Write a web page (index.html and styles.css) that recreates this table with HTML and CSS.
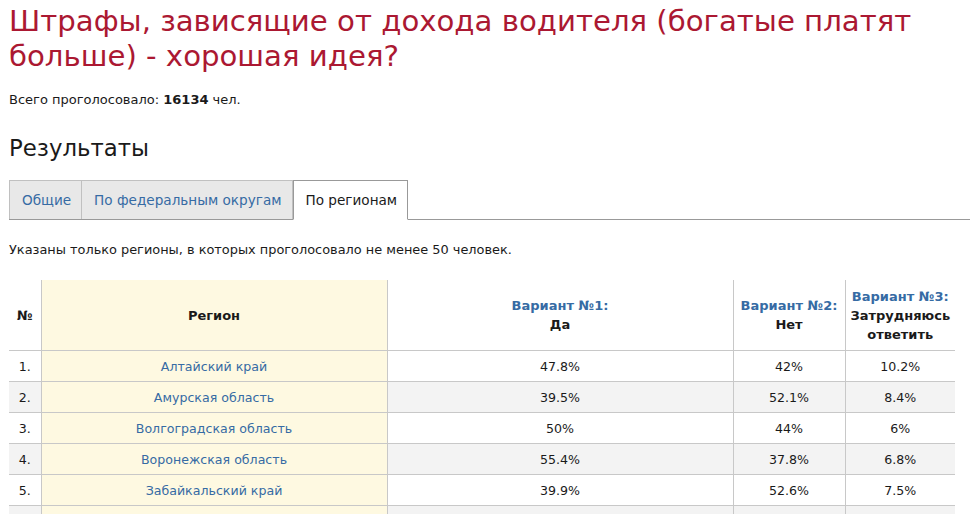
FILE: index.html
```html
<!DOCTYPE html>
<html lang="ru">
<head>
<meta charset="utf-8">
<title>Опрос</title>
<link rel="stylesheet" href="styles.css">
</head>
<body>
<div class="page">
  <h1 class="title">Штрафы, зависящие от дохода водителя (богатые платят больше) - хорошая идея?</h1>
  <p class="total">Всего проголосовало: <b>16134</b> чел.</p>
  <h2 class="subtitle">Результаты</h2>
  <div class="tabs">
    <a class="tab">Общие</a>
    <a class="tab">По федеральным округам</a>
    <a class="tab active">По регионам</a>
  </div>
  <p class="note">Указаны только регионы, в которых проголосовало не менее 50 человек.</p>
  <table class="results">
    <colgroup>
      <col class="c-num"><col class="c-region"><col class="c-v1"><col class="c-v2"><col class="c-v3">
    </colgroup>
    <thead>
      <tr>
        <th>№</th>
        <th class="region">Регион</th>
        <th><span class="var">Вариант №1:</span><br>Да</th>
        <th><span class="var">Вариант №2:</span><br>Нет</th>
        <th><span class="var">Вариант №3:</span><br>Затрудняюсь ответить</th>
      </tr>
    </thead>
    <tbody>
      <tr><td>1.</td><td class="region"><a>Алтайский край</a></td><td>47.8%</td><td>42%</td><td>10.2%</td></tr>
      <tr><td>2.</td><td class="region"><a>Амурская область</a></td><td>39.5%</td><td>52.1%</td><td>8.4%</td></tr>
      <tr><td>3.</td><td class="region"><a>Волгоградская область</a></td><td>50%</td><td>44%</td><td>6%</td></tr>
      <tr><td>4.</td><td class="region"><a>Воронежская область</a></td><td>55.4%</td><td>37.8%</td><td>6.8%</td></tr>
      <tr><td>5.</td><td class="region"><a>Забайкальский край</a></td><td>39.9%</td><td>52.6%</td><td>7.5%</td></tr>
      <tr><td>6.</td><td class="region"><a>Иркутская область</a></td><td>45.1%</td><td>46.3%</td><td>8.6%</td></tr>
    </tbody>
  </table>
</div>
</body>
</html>
```

FILE: styles.css
```css
html, body {
  margin: 0;
  padding: 0;
  background: #fff;
}
body {
  font-family: "DejaVu Sans", Verdana, sans-serif;
  color: #1a1a1a;
  font-size: 12px;
}
.page {
  padding: 4px 0 0 9px;
}
.title {
  margin: 0;
  font-size: 29.2px;
  line-height: 35px;
  font-weight: normal;
  color: #ab1832;
  width: 940px;
}
.total {
  margin: 18px 0 0;
  line-height: 16px;
  font-size: 13px;
}
.subtitle {
  margin: 25px 0 0;
  font-size: 22.8px;
  line-height: 30px;
  font-weight: normal;
  color: #1a1a1a;
}
.tabs {
  display: flex;
  margin-top: 17px;
  border-bottom: 1px solid #999;
  height: 39px;
}
.tab {
  display: flex;
  align-items: center;
  padding: 0 10px 0 12px;
  font-size: 13.6px;
  color: #366ba4;
  background: #e8e8e8;
  border: 1px solid #c0c0c0;
  border-bottom: none;
  border-left: none;
}
.tab:first-child {
  border-left: 1px solid #c0c0c0;
}
.tab.active {
  background: #fff;
  color: #1a1a1a;
  border: 1px solid #999;
  border-bottom: 1px solid #fff;
  margin-bottom: -1px;
}
.note {
  margin: 22px 0 0;
  line-height: 16px;
  font-size: 12.9px;
}
.results {
  margin-top: 22px;
  border-collapse: collapse;
  width: 946px;
  table-layout: fixed;
}
.c-num { width: 32px; }
.c-region { width: 346px; }
.c-v1 { width: 346px; }
.c-v2 { width: 112px; }
.c-v3 { width: 110px; }
.results th, .results td {
  text-align: center;
  padding: 0 2px;
  border-left: 1px solid #c8c8c8;
  border-bottom: 1px solid #c8c8c8;
}
.results th:first-child, .results td:first-child {
  border-left: none;
}
.results th {
  height: 70px;
  font-weight: bold;
  font-size: 13px;
  line-height: 19px;
  color: #1a1a1a;
}
.results td {
  height: 30px;
  font-size: 12.6px;
}
.results .region {
  background: #fef9e1;
}
.results tbody tr:nth-child(even) td {
  background: #f3f3f3;
}
.results tbody tr:nth-child(even) td.region {
  background: #fef9e1;
}
.var {
  color: #366ba4;
}
.results a {
  color: #366ba4;
  text-decoration: none;
}
```
